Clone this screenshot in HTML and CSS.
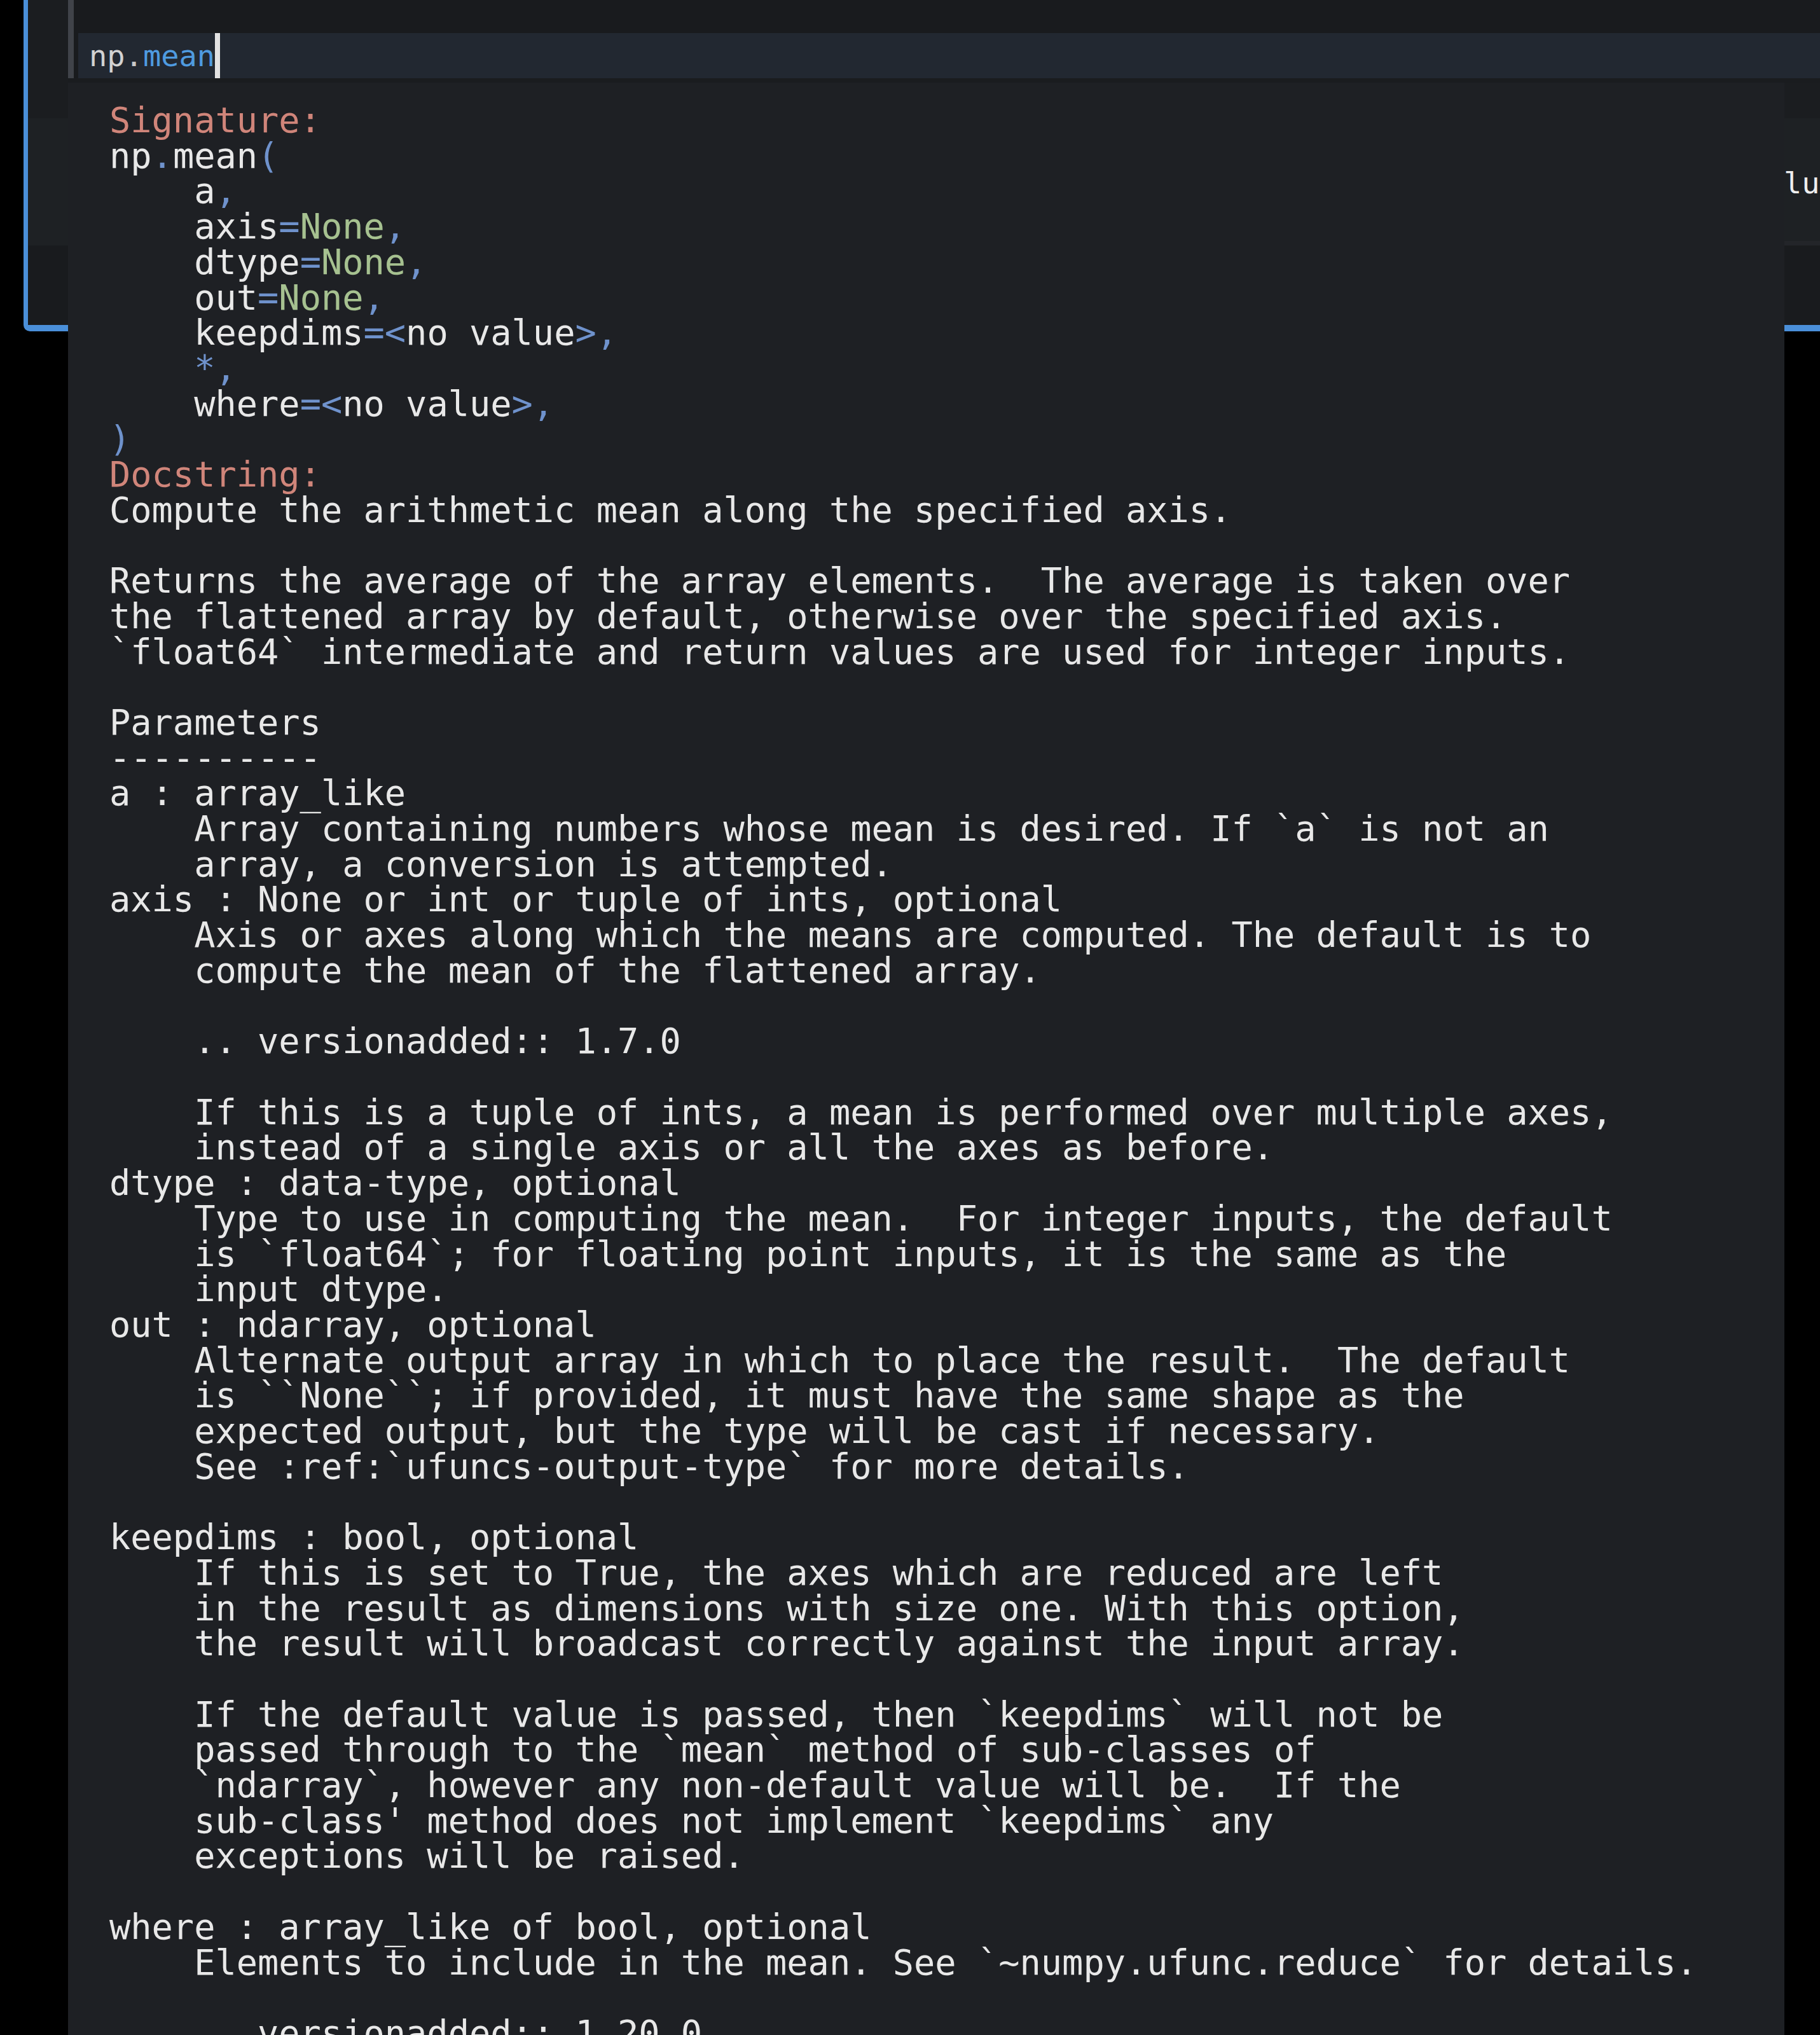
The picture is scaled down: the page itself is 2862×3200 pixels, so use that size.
FILE: index.html
```html
<!DOCTYPE html>
<html>
<head>
<meta charset="utf-8">
<title>np.mean tooltip</title>
<link rel="stylesheet" href="styles.css">
</head>
<body>
<div class="notebook">
  <div class="cell">
    <div class="gutter gutter-top"></div>
    <div class="gutter gutter-mid"></div>
    <div class="gutter gutter-bot"></div>
    <div class="input">
      <div class="editor"><span class="tok-name">np</span><span class="tok-dot">.</span><span class="tok-attr">mean</span><span class="cursor"></span></div>
    </div>
    <div class="row-gap"></div>
    <div class="row-prompt"></div>
    <div class="row-output"><span class="out-text">lue</span></div>
    <div class="row-line"></div>
    <div class="row-bottom"></div>
  </div>
</div>
<div class="tooltip"><pre class="doc"><span class="lbl">Signature:</span>
np<span class="p">.</span>mean<span class="p">(</span>
    a<span class="p">,</span>
    axis<span class="p">=</span><span class="k">None</span><span class="p">,</span>
    dtype<span class="p">=</span><span class="k">None</span><span class="p">,</span>
    out<span class="p">=</span><span class="k">None</span><span class="p">,</span>
    keepdims<span class="p">=&lt;</span>no value<span class="p">&gt;,</span>
    <span class="p">*,</span>
    where<span class="p">=&lt;</span>no value<span class="p">&gt;,</span>
<span class="p">)</span>
<span class="lbl">Docstring:</span>
Compute the arithmetic mean along the specified axis.

Returns the average of the array elements.  The average is taken over
the flattened array by default, otherwise over the specified axis.
`float64` intermediate and return values are used for integer inputs.

Parameters
----------
a : array_like
    Array containing numbers whose mean is desired. If `a` is not an
    array, a conversion is attempted.
axis : None or int or tuple of ints, optional
    Axis or axes along which the means are computed. The default is to
    compute the mean of the flattened array.

    .. versionadded:: 1.7.0

    If this is a tuple of ints, a mean is performed over multiple axes,
    instead of a single axis or all the axes as before.
dtype : data-type, optional
    Type to use in computing the mean.  For integer inputs, the default
    is `float64`; for floating point inputs, it is the same as the
    input dtype.
out : ndarray, optional
    Alternate output array in which to place the result.  The default
    is ``None``; if provided, it must have the same shape as the
    expected output, but the type will be cast if necessary.
    See :ref:`ufuncs-output-type` for more details.

keepdims : bool, optional
    If this is set to True, the axes which are reduced are left
    in the result as dimensions with size one. With this option,
    the result will broadcast correctly against the input array.

    If the default value is passed, then `keepdims` will not be
    passed through to the `mean` method of sub-classes of
    `ndarray`, however any non-default value will be.  If the
    sub-class' method does not implement `keepdims` any
    exceptions will be raised.

where : array_like of bool, optional
    Elements to include in the mean. See `~numpy.ufunc.reduce` for details.

    .. versionadded:: 1.20.0
</pre></div>
</body>
</html>
```
FILE: styles.css
```css
html, body {
  margin: 0;
  padding: 0;
  width: 2862px;
  height: 3200px;
  overflow: hidden;
  background: #000000;
}

body {
  position: relative;
  font-family: "DejaVu Sans Mono", "Liberation Mono", monospace;
  color: #e6e6e6;
}

.notebook {
  padding-left: 37px;
}

.cell {
  display: grid;
  grid-template-columns: 63px 1fr;
  grid-template-rows: 52px 71px 7px 56px 193px 7px 125px;
  border-left: 7px solid #4a8fd9;
  border-bottom: 10px solid #4a8fd9;
  border-bottom-left-radius: 10px;
  overflow: hidden;
}

.gutter {
  grid-column: 1;
}

.gutter-top {
  grid-row: 1 / 5;
  background: #1b1d20;
}

.gutter-mid {
  grid-row: 5 / 7;
  background: #1e2124;
}

.gutter-bot {
  grid-row: 7;
  background: #191b1e;
}

.input {
  grid-column: 2;
  grid-row: 1 / 3;
  display: flex;
  flex-direction: column;
  justify-content: flex-end;
  border-left: 9px solid #404349;
  padding-left: 7px;
  background: #191b1e;
}

.editor {
  height: 71px;
  background: #222831;
  padding-left: 17px;
  font-size: 47px;
  line-height: 71px;
  white-space: pre;
}

.tok-name {
  color: #d2d2d2;
}

.tok-dot {
  color: #c8c8c8;
}

.tok-attr {
  color: #4f9be0;
}

.cursor {
  display: inline-block;
  width: 8px;
  height: 71px;
  vertical-align: top;
  background: #e2e2e2;
}

.row-gap {
  grid-column: 2;
  grid-row: 3;
  background: #1a1c1f;
}

.row-prompt {
  grid-column: 2;
  grid-row: 4;
  background: #1b1d20;
}

.row-output {
  grid-column: 2;
  grid-row: 5;
  background: #1e2124;
  padding-left: 2698px;
  padding-top: 74px;
  font-size: 47px;
  line-height: 55px;
  white-space: pre;
  overflow: hidden;
  color: #eeeeee;
}

.row-line {
  grid-column: 2;
  grid-row: 6;
  background: #232529;
}

.row-bottom {
  grid-column: 2;
  grid-row: 7;
  background: #191b1e;
}

.tooltip {
  position: absolute;
  left: 107px;
  top: 130px;
  width: 2699px;
  height: 3200px;
  background: #1e2024;
  padding: 32px 0 0 65px;
  box-sizing: border-box;
}

.doc {
  margin: 0;
  font-family: "DejaVu Sans Mono", "Liberation Mono", monospace;
  font-size: 55.3px;
  line-height: 55.7px;
  color: #e8e8e8;
  white-space: pre;
}

.lbl {
  color: #d0857a;
}

.p {
  color: #6f92cc;
}

.k {
  color: #a6c190;
}
```
